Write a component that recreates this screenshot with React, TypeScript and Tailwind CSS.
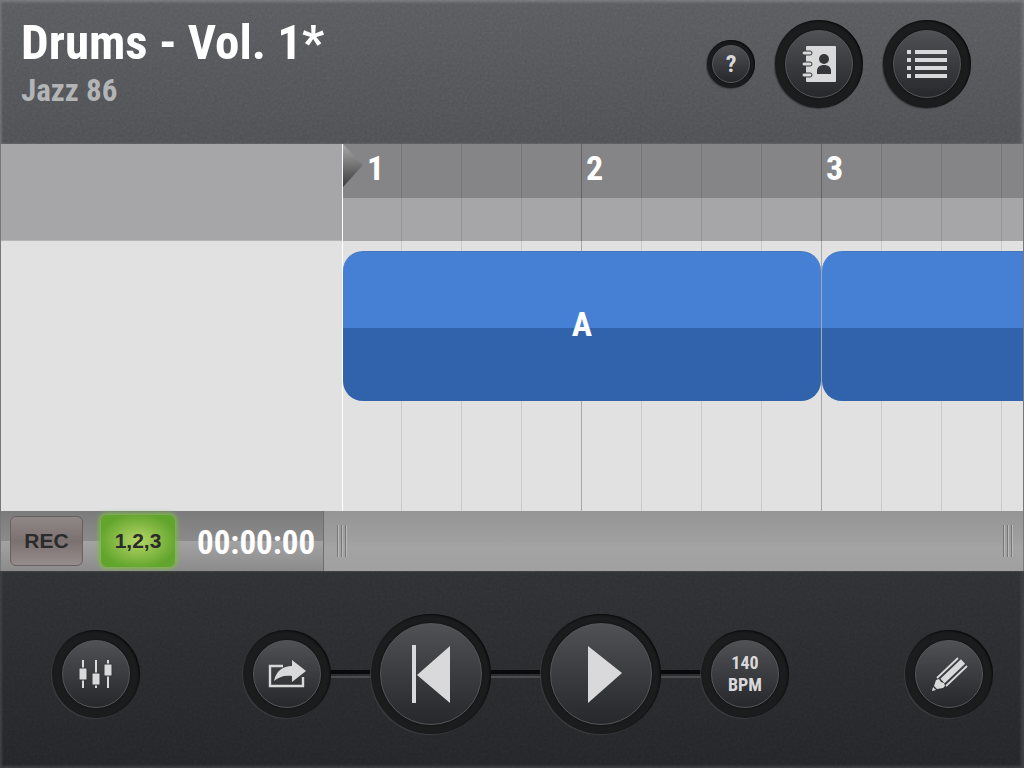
import React, { useState } from "react";

const narrow = "font-['Liberation_Sans_Narrow','Roboto_Condensed','DejaVu_Sans_Condensed',sans-serif] font-bold";

const beats = Array.from({ length: 16 }, (_, i) => i);
const bars = [1, 2, 3];

interface KnobProps {
  label: string;
  size: "sm" | "md" | "lg";
  onClick?: () => void;
  children: React.ReactNode;
}

const ringSize = {
  sm: "size-12 p-[5px]",
  md: "size-[88px] p-[10px]",
  lg: "size-[120px] p-[9px]",
};

function Knob({ label, size, onClick, children }: KnobProps) {
  return (
    <button
      type="button"
      aria-label={label}
      onClick={onClick}
      className={`relative shrink-0 rounded-full bg-[#1b1c1e] shadow-[inset_-1px_1px_2px_#0a0a0b,-1px_1px_1px_#3b3d40] ${ringSize[size]}`}
    >
      <span className="flex size-full items-center justify-center rounded-full border border-[#55565a] bg-linear-to-b from-[#505155] to-[#27282b] text-[#d9d9db] shadow-[0_0_2px_#0c0c0d]">
        {children}
      </span>
    </button>
  );
}

function Grain({ id, opacity }: { id: string; opacity: string }) {
  return (
    <svg className={`pointer-events-none absolute inset-0 size-full ${opacity}`} aria-hidden="true">
      <filter id={id}>
        <feTurbulence type="fractalNoise" baseFrequency="0.4" numOctaves="2" />
        <feColorMatrix type="saturate" values="0" />
      </filter>
      <rect width="100%" height="100%" filter={`url(#${id})`} />
    </svg>
  );
}

function Connector({ width }: { width: string }) {
  return <span className={`h-2 border-t-4 border-b-2 border-t-[#08090a] border-b-[#4a4b4e] ${width}`} aria-hidden="true" />;
}

function Grip() {
  return (
    <button type="button" aria-label="Resize visible range" className="flex h-8 gap-[2px]">
      {[0, 1, 2].map((i) => (
        <span key={i} className="h-full w-[2px] border-r border-[#b9b9b9] bg-[#777777]" />
      ))}
    </button>
  );
}

function Clip({ name, className }: { name: string; className: string }) {
  return (
    <button
      type="button"
      aria-label={name || "Next section"}
      className={`flex h-[150px] shrink-0 items-center justify-center border-t border-[#4576b9] bg-linear-to-b from-[#4580d4] from-51% to-[#3163ac] to-51% pb-1.5 text-[34px] leading-none text-white ${className}`}
    >
      {name}
    </button>
  );
}

function AddressBookIcon() {
  return (
    <svg className="h-[38px] w-[36px]" viewBox="0 0 36 38" aria-hidden="true">
      <rect x="5" y="1" width="30" height="36" rx="1" fill="currentColor" />
      {[6, 17, 28].map((y) => (
        <rect key={y} x="1" y={y} width="10" height="4" rx="2" fill="currentColor" stroke="#35363a" strokeWidth="1" />
      ))}
      <circle cx="23" cy="14" r="5" fill="#35363a" />
      <path d="M16 29v-3c0-4 3-6 7-6s7 2 7 6v3z" fill="#35363a" />
    </svg>
  );
}

function ListIcon() {
  return (
    <svg className="h-[28px] w-[40px]" viewBox="0 0 40 28" fill="currentColor" aria-hidden="true">
      {[0, 8, 16, 24].map((y) => (
        <g key={y}>
          <rect x="0" y={y} width="4" height="4" />
          <rect x="8" y={y} width="32" height="4" />
        </g>
      ))}
    </svg>
  );
}

function FadersIcon() {
  return (
    <svg className="h-[30px] w-[34px]" viewBox="0 0 34 30" fill="currentColor" aria-hidden="true">
      <path d="M3 1h2v28H3zM16 1h2v28h-2zM28 1h2v28h-2z" />
      <rect x="0" y="9" width="8" height="12" rx="1" stroke="#35363a" />
      <rect x="13" y="14" width="8" height="12" rx="1" stroke="#35363a" />
      <rect x="25" y="5" width="8" height="12" rx="1" stroke="#35363a" />
    </svg>
  );
}

function ShareIcon() {
  return (
    <svg className="h-[28px] w-[38px]" viewBox="0 0 38 28" aria-hidden="true">
      <path d="M15 6H2v20h33V17" fill="none" stroke="currentColor" strokeWidth="2.4" />
      <path d="M24 0l14 11-14 11v-6c-8-1-13 1-18 5 2-10 9-15 18-15z" fill="currentColor" />
    </svg>
  );
}

function PencilIcon() {
  return (
    <svg className="size-[38px]" viewBox="0 0 38 38" fill="none" stroke="currentColor" aria-hidden="true">
      <path d="M7 23L28 3M16 31l21-20" strokeWidth="1.8" />
      <path d="M12.5 26L33 6.5" strokeWidth="6" />
      <path d="M6 25l3-1 2 3 3 1 1 3-2 2-6 1-3-3zM3 32l3 3-4 1z" fill="currentColor" stroke="none" />
    </svg>
  );
}

export default function App() {
  const [playing, setPlaying] = useState(false);
  const [countIn, setCountIn] = useState(true);

  return (
    <div className={`flex min-h-screen flex-col overflow-hidden bg-[#2a2c2e] ${narrow}`}>
      {/* Header */}
      <header className="relative flex h-36 shrink-0 items-start bg-linear-to-b from-[#595b5f] to-[#4d4f53] pr-[53px] pl-[21px] shadow-[inset_0_2px_3px_#77797c,inset_-3px_0_3px_#66686b,inset_2px_0_2px_#66686b]">
        <Grain id="grain-top" opacity="opacity-10" />
        <div className="relative flex-1 pt-3.5">
          <h1 className="text-[49px] leading-[58px] text-white">Drums - Vol. 1*</h1>
          <p className="text-[31px] leading-[37px] text-[#b3b4b6]">Jazz 86</p>
        </div>
        <nav className="relative flex items-center gap-5 pt-5">
          <Knob label="Help" size="sm">
            <span className="text-2xl leading-none">?</span>
          </Knob>
          <Knob label="Song library" size="md">
            <AddressBookIcon />
          </Knob>
          <Knob label="Song list" size="md">
            <ListIcon />
          </Knob>
        </nav>
      </header>

      {/* Timeline */}
      <main className="flex flex-1 border-x border-[#77787a] bg-[#e1e1e1]">
        <div className="w-[341px] shrink-0">
          <div className="h-[97px] border-b border-[#b5b5b6] bg-[#a6a6a8]" />
        </div>
        <div className="relative min-w-0 flex-1 overflow-hidden border-l border-white">
          <div className="h-[54px] bg-[#858587]" />
          <div className="h-[43px] bg-[#a6a6a8]" />

          <div className="absolute inset-0 flex" aria-hidden="true">
            {beats.map((i) => (
              <span
                key={i}
                className={`shrink-0 border-r ${i === 0 ? "w-[59px]" : "w-[60px]"} ${i % 4 === 3 ? "border-black/25" : "border-black/10"}`}
              />
            ))}
          </div>

          <div className="absolute top-0 left-0 flex text-[34px] leading-[48px] text-white">
            {bars.map((bar) => (
              <span key={bar} className={bar === 1 ? "w-[239px] shrink-0 pl-6" : "w-[240px] shrink-0 pl-1"}>
                {bar}
              </span>
            ))}
          </div>

          <svg className="absolute top-0 left-0 h-11 w-5" viewBox="0 0 20 44" aria-hidden="true">
            <linearGradient id="playhead" x1="0" y1="0" x2="0" y2="1">
              <stop offset="0" stopColor="#a9a9a9" />
              <stop offset="1" stopColor="#3c3c3c" />
            </linearGradient>
            <path d="M0 0l20 21L0 43z" fill="url(#playhead)" />
          </svg>

          <div className="relative flex gap-px pt-[10px]">
            <Clip name="A" className="w-[478px] rounded-[20px]" />
            <Clip name="" className="w-[478px] rounded-[20px]" />
          </div>
        </div>
      </main>

      {/* Record bar */}
      <section className="flex h-[60px] shrink-0 border-x border-[#77787a]">
        <div className="flex w-[323px] shrink-0 items-center border-r border-[#6d6d6d] bg-[linear-gradient(#7b7b7b,#8b8b8b_50%,#a3a3a3_50%,#8b8b8b)] pl-[9px] font-['Liberation_Sans',sans-serif] text-[21px] text-[#2b2b2b]">
          <button
            type="button"
            className="h-[50px] w-[73px] rounded-md border border-[#67605f] bg-linear-to-b from-[#908787] via-[#7c7171] to-[#958c8c]"
          >
            REC
          </button>
          <button
            type="button"
            aria-pressed={countIn}
            onClick={() => setCountIn(!countIn)}
            className="ml-[18px] h-[52px] w-[74px] rounded-md bg-[radial-gradient(#b5d667,#62a52c_75%)] shadow-[0_0_4px_2px_#7fb84a]"
          >
            1,2,3
          </button>
          <time className={`ml-[22px] pt-1 text-[33px] leading-10 text-white ${narrow}`}>00:00:00</time>
        </div>
        <div className="flex flex-1 items-center justify-between bg-[linear-gradient(#959595,#9f9f9f_50%,#a4a4a4_60%,#a0a0a0)] pr-[10px] pl-[13px]">
          <Grip />
          <Grip />
        </div>
      </section>

      {/* Transport */}
      <footer className="relative flex h-[197px] shrink-0 items-center bg-linear-to-b from-[#2e3033] to-[#222427] pt-2 pr-[31px] pl-[52px] shadow-[inset_0_1px_2px_#3e4043,inset_-3px_-2px_3px_#3c3e41,inset_2px_0_2px_#3c3e41]">
        <Grain id="grain-bottom" opacity="opacity-5" />
        <Knob label="Mixer" size="md">
          <FadersIcon />
        </Knob>
        <div className="relative ml-[103px] flex items-center">
          <Knob label="Share" size="md">
            <ShareIcon />
          </Knob>
          <Connector width="w-10" />
          <Knob label="Back to start" size="lg">
            <svg className="h-[58px] w-[38px]" viewBox="0 0 38 58" fill="currentColor" aria-hidden="true">
              <path d="M0 0h4v58H0zM38 1v57L5 30z" />
            </svg>
          </Knob>
          <Connector width="w-[50px]" />
          <Knob label={playing ? "Pause" : "Play"} size="lg" onClick={() => setPlaying(!playing)}>
            <svg className="ml-2 h-[58px] w-[34px]" viewBox="0 0 34 58" fill="currentColor" aria-hidden="true">
              {playing ? <path d="M2 4h10v50H2zM22 4h10v50H22z" /> : <path d="M0 1l34 27L0 58z" />}
            </svg>
          </Knob>
          <Connector width="w-10" />
          <Knob label="Tempo" size="md">
            <span className="text-lg leading-[22px]">
              140
              <br />
              BPM
            </span>
          </Knob>
        </div>
        <div className="relative ml-auto flex">
          <Knob label="Edit" size="md">
            <PencilIcon />
          </Knob>
        </div>
      </footer>
    </div>
  );
}
